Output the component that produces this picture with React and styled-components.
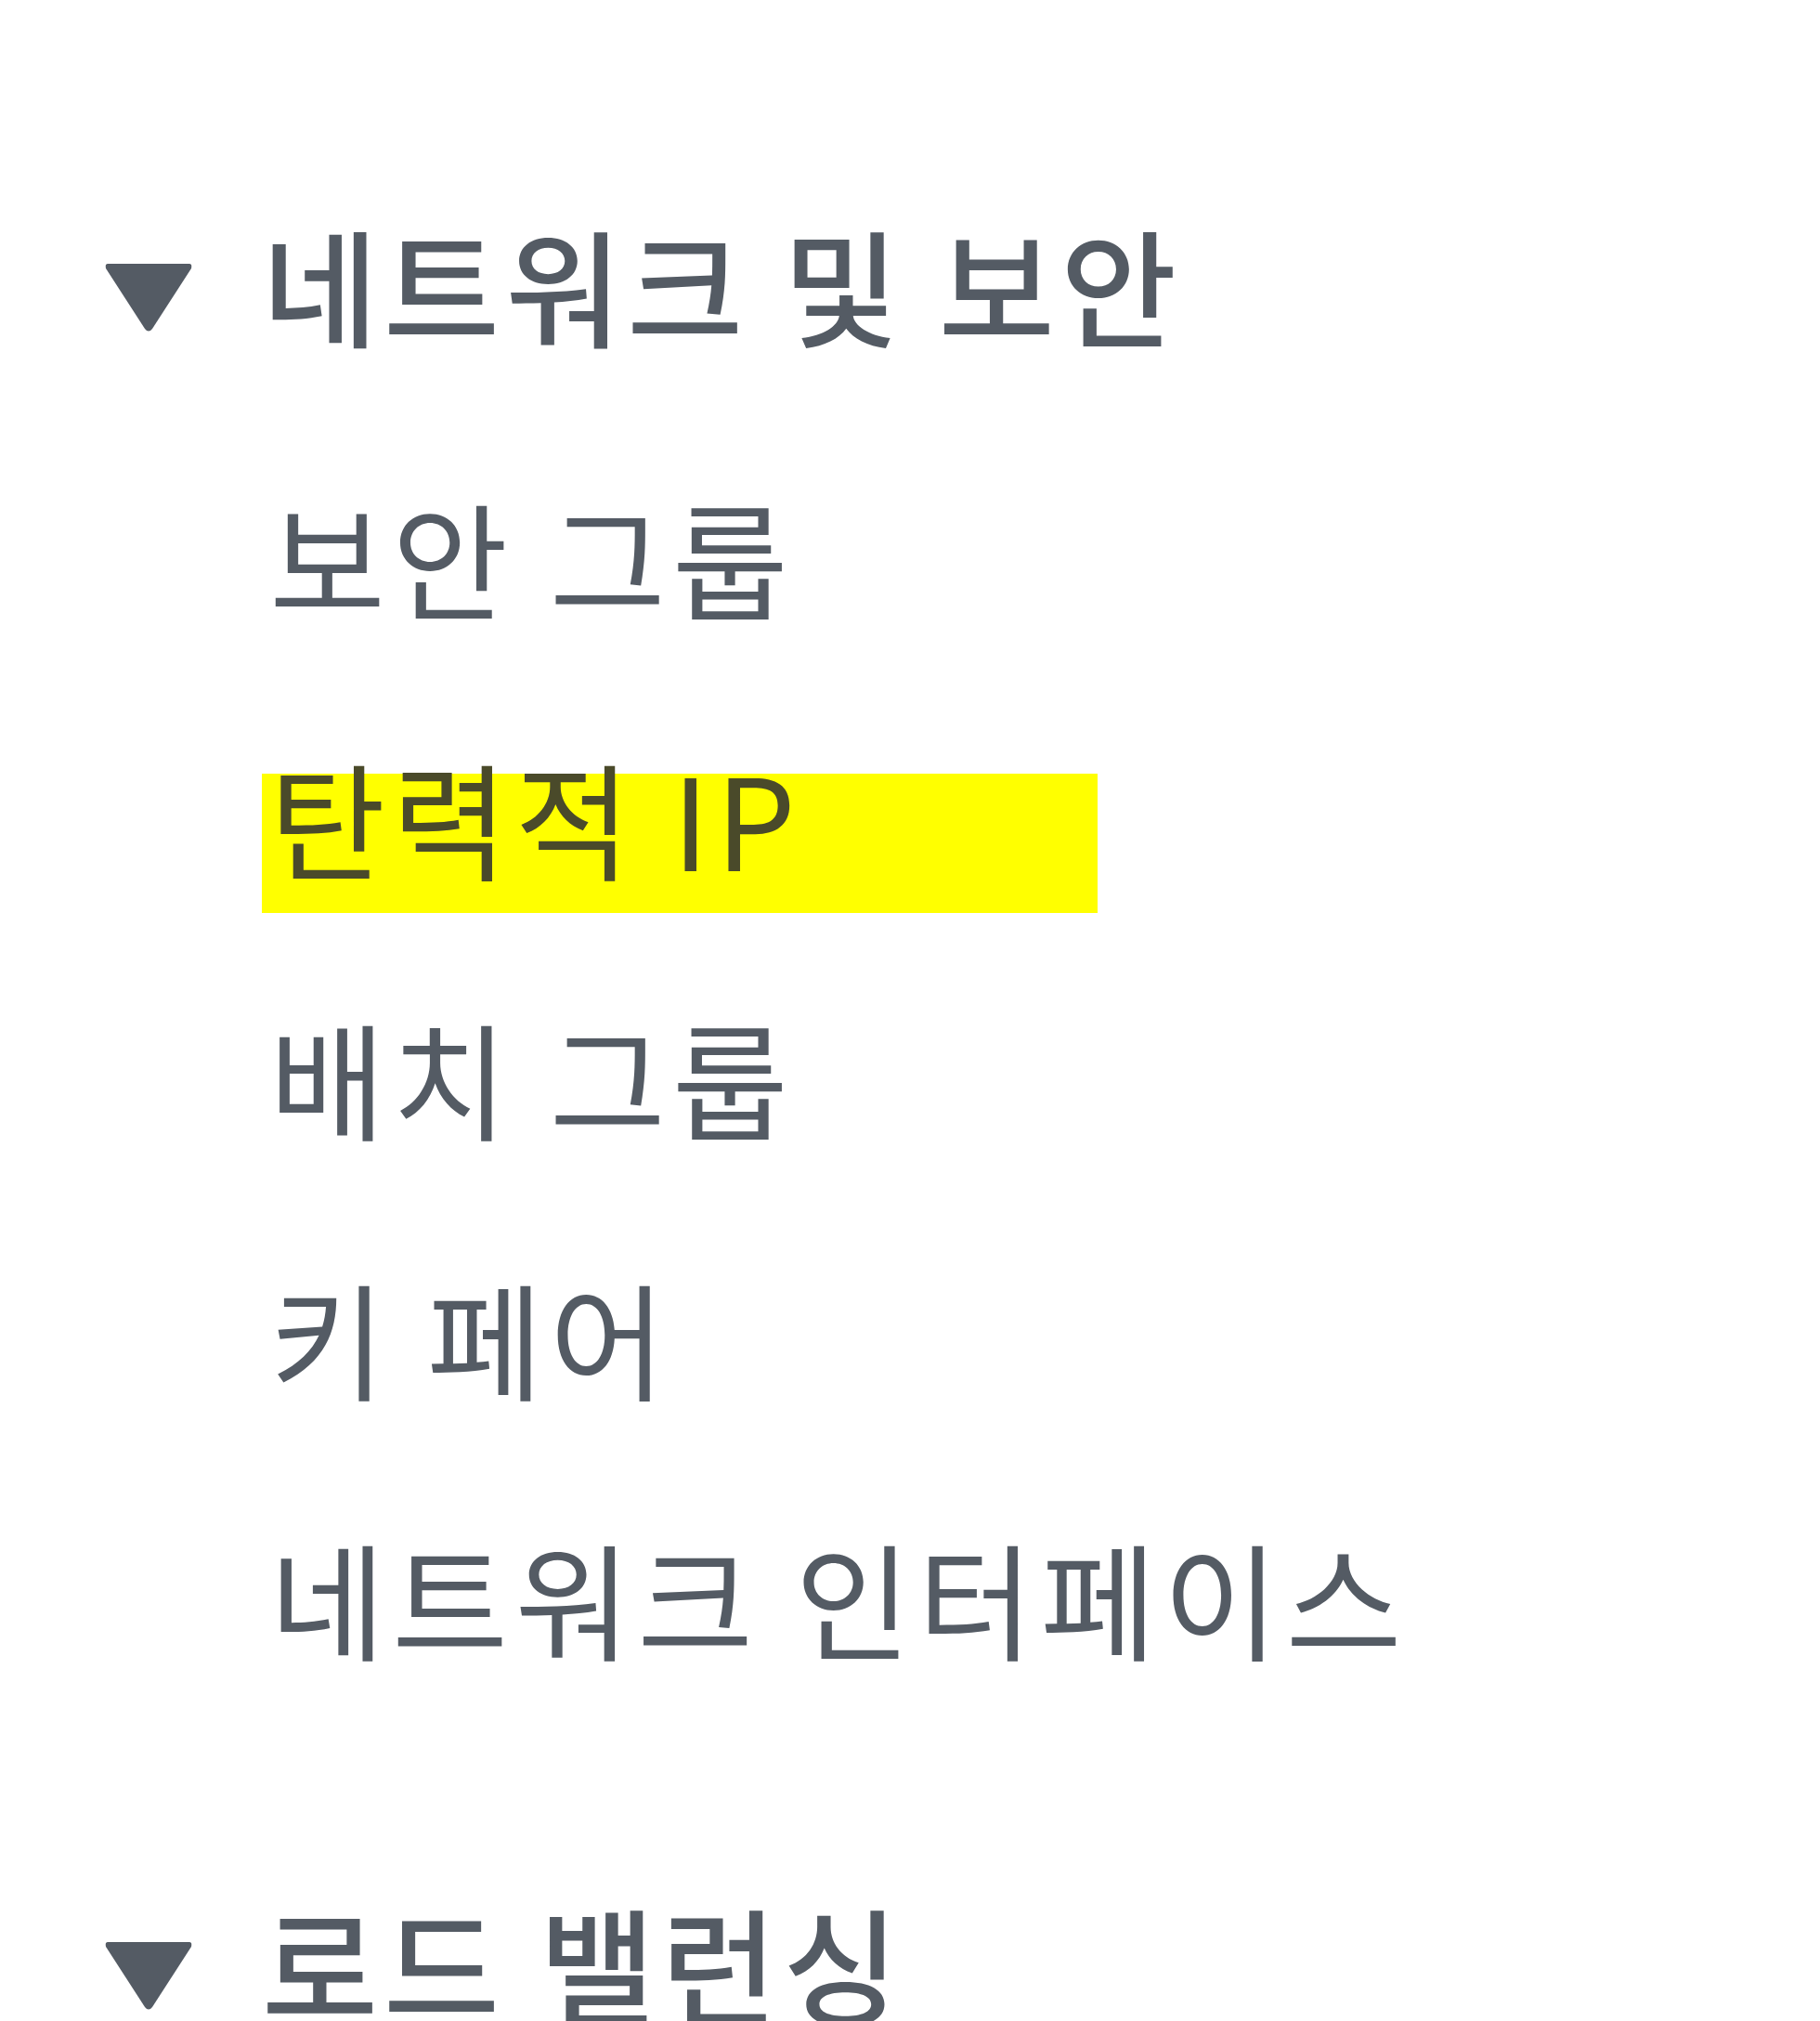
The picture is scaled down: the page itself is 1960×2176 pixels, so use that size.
import styled, { createGlobalStyle } from "styled-components"

const GlobalStyle = createGlobalStyle`
  html, body {
    margin: 0;
    padding: 0;
    background: #ffffff;
  }
  body {
    font-family: "Noto Sans CJK KR", "Noto Sans", sans-serif;
    color: #545b64;
  }
`

const sections = [
  {
    title: "네트워크 및 보안",
    items: [
      { label: "보안 그룹" },
      { label: "탄력적 IP", active: true },
      { label: "배치 그룹" },
      { label: "키 페어" },
      { label: "네트워크 인터페이스" },
    ],
  },
  {
    title: "로드 밸런싱",
    items: [],
  },
]

const Nav = styled.nav`
  width: 1960px;
  height: 2176px;
  overflow: hidden;
  padding: 165px 0 0 113px;
  box-sizing: border-box;
  display: flex;
  flex-direction: column;
  gap: 113px;
`

const Section = styled.section`
  display: flex;
  flex-direction: column;
  gap: 14px;
`

const SectionHeader = styled.div`
  display: flex;
  align-items: center;
  height: 280px;
  gap: 75px;
`

const CaretIcon = styled.svg`
  width: 94px;
  height: 75px;
  flex: none;
  margin-top: 29px;
`

const HeaderText = styled.span`
  font-size: 136px;
  line-height: 280px;
  font-weight: 500;
  letter-spacing: 6px;
  white-space: nowrap;
`

const ItemList = styled.ul`
  list-style: none;
  margin: 0;
  padding: 0 0 0 177px;
`

const Item = styled.li`
  display: flex;
  align-items: flex-start;
  height: 280px;
`

const Label = styled.a`
  display: block;
  font-size: 136px;
  letter-spacing: 7px;
  white-space: nowrap;
  color: #545b64;
  text-decoration: none;
  line-height: ${(p) => (p.$active ? "92px" : "280px")};
  ${(p) =>
    p.$active &&
    `
    background: #ffff00;
    color: #4a4a2a;
    width: 900px;
    height: 150px;
    margin: 94px 0 0 -8px;
    padding-left: 8px;
    box-sizing: border-box;
  `}
`

const Caret = () => (
  <CaretIcon viewBox="0 0 94 75">
    <path d="M3 2 L91 2 Q94 2 93 7 L51 72 Q47 77 43 72 L1 7 Q0 2 3 2 Z" fill="#545b64" />
  </CaretIcon>
)

export default function App() {
  return (
    <>
      <GlobalStyle />
      <Nav>
        {sections.map((section) => (
          <Section key={section.title}>
            <SectionHeader>
              <Caret />
              <HeaderText>{section.title}</HeaderText>
            </SectionHeader>
            {section.items.length > 0 && (
              <ItemList>
                {section.items.map((item) => (
                  <Item key={item.label}>
                    <Label href="#" $active={item.active}>
                      {item.label}
                    </Label>
                  </Item>
                ))}
              </ItemList>
            )}
          </Section>
        ))}
      </Nav>
    </>
  )
}
